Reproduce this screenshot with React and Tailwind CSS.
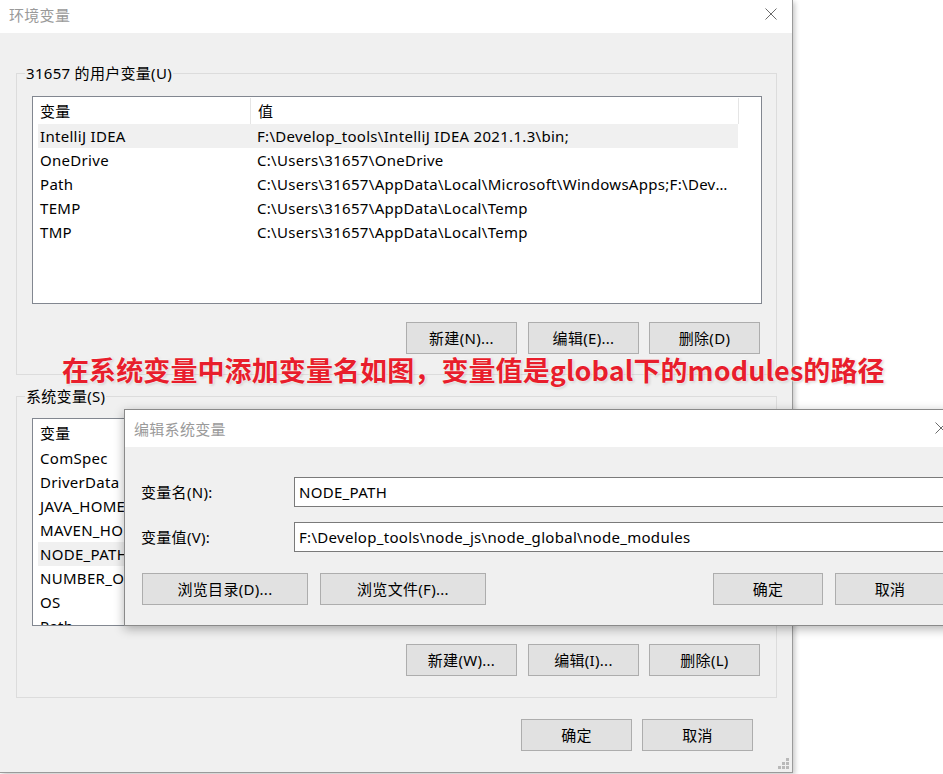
import React from "react";

const userVars = [
  ["IntelliJ IDEA", "F:\\Develop_tools\\IntelliJ IDEA 2021.1.3\\bin;"],
  ["OneDrive", "C:\\Users\\31657\\OneDrive"],
  ["Path", "C:\\Users\\31657\\AppData\\Local\\Microsoft\\WindowsApps;F:\\Develop_tools\\IntelliJ IDEA 2021.1.3\\bin;"],
  ["TEMP", "C:\\Users\\31657\\AppData\\Local\\Temp"],
  ["TMP", "C:\\Users\\31657\\AppData\\Local\\Temp"],
];

const sysVars = [
  ["ComSpec", "C:\\Windows\\system32\\cmd.exe"],
  ["DriverData", "C:\\Windows\\System32\\Drivers\\DriverData"],
  ["JAVA_HOME", "F:\\Develop_tools\\Java\\jdk1.8.0_291"],
  ["MAVEN_HOME", "F:\\Develop_tools\\apache-maven-3.8.1"],
  ["NODE_PATH", "F:\\Develop_tools\\node_js\\node_global\\node_modules"],
  ["NUMBER_OF_PROCESSORS", "8"],
  ["OS", "Windows_NT"],
  ["Path", "C:\\Windows\\system32;C:\\Windows;C:\\Windows\\System32\\Wbem"],
];

const CloseX = ({ className }) => (
  <svg width="12" height="12" viewBox="0 0 12 12" className={className}>
    <path d="M0.5 0.5 L11.5 11.5 M11.5 0.5 L0.5 11.5" stroke="#6b6b6b" strokeWidth="1" fill="none" />
  </svg>
);

const Button = ({ children, className = "" }) => (
  <button
    className={`h-[32px] bg-[#e1e1e1] border border-[#adadad] text-[15px] leading-[20px] text-black ${className}`}
  >
    {children}
  </button>
);

const VarList = ({ rows, selected, height }) => (
  <div className={`w-[730px] ${height} border border-[#828790] bg-white overflow-hidden`}>
    <div className="h-[27px] flex">
      <div className="w-[218px] h-[26px] mt-[1px] border-r border-[#e5e5e5] pl-[7px] leading-[26px]">变量</div>
      <div className="w-[488px] h-[26px] mt-[1px] border-r border-[#e5e5e5] pl-[7px] leading-[26px]">值</div>
    </div>
    <div className="pl-[5px]">
      {rows.map(([name, value], i) => (
        <div
          key={name + i}
          className={`w-[700px] h-[24px] flex leading-[24px] ${i === selected ? "bg-[#f0f0f0]" : ""}`}
        >
          <div className="w-[219px] pl-[2px] whitespace-nowrap overflow-hidden">{name}</div>
          <div className="w-[478px] whitespace-nowrap overflow-hidden text-ellipsis">{value}</div>
        </div>
      ))}
    </div>
  </div>
);

const GroupBox = ({ label, children, className = "" }) => (
  <div className={`relative h-[302px] border border-[#dcdcdc] ${className}`}>
    <span className="absolute left-[8px] top-[-11px] px-[1px] bg-[#f0f0f0] leading-[20px]">{label}</span>
    {children}
  </div>
);

export default function App() {
  return (
    <div className="relative w-[943px] h-[774px] overflow-hidden bg-white text-[15px] tracking-[0.3px] text-black font-['Noto_Sans','Noto_Sans_CJK_SC',sans-serif]">
      {/* main window */}
      <div className="relative w-[793px] h-[773px] flex flex-col bg-[#f0f0f0] border-r border-b border-[#9a9a9a] shadow-[2px_2px_5px_rgba(0,0,0,0.22)]">
        <div className="h-[33px] shrink-0 bg-white flex items-start pl-[9px]">
          <span className="mt-[5px] leading-[20px] text-[#9a9a9a]">环境变量</span>
          <CloseX className="ml-auto mr-[15px] mt-[8px]" />
        </div>

        <div className="flex-1 flex flex-col pl-[16px] pr-[15px] pt-[40px]">
          <GroupBox label="31657 的用户变量(U)" className="pt-[22px] pl-[15px]">
            <VarList rows={userVars} selected={0} height="h-[208px]" />
            <div className="flex justify-end pr-[16px] mt-[18px]">
              <Button className="w-[111px]">新建(N)...</Button>
              <Button className="w-[111px] ml-[11px]">编辑(E)...</Button>
              <Button className="w-[111px] ml-[10px]">删除(D)</Button>
            </div>
          </GroupBox>

          <GroupBox label="系统变量(S)" className="mt-[21px] pt-[21px] pl-[15px]">
            <VarList rows={sysVars} selected={4} height="h-[208px]" />
            <div className="flex justify-end pr-[16px] mt-[18px]">
              <Button className="w-[111px]">新建(W)...</Button>
              <Button className="w-[111px] ml-[11px]">编辑(I)...</Button>
              <Button className="w-[111px] ml-[10px]">删除(L)</Button>
            </div>
          </GroupBox>

          <div className="flex justify-end mt-[21px] mr-[24px]">
            <Button className="w-[111px]">确定</Button>
            <Button className="w-[111px] ml-[10px]">取消</Button>
          </div>
        </div>

        <svg width="12" height="12" viewBox="0 0 12 12" className="absolute right-[2px] bottom-[2px]">
          <g fill="#b9b9b9">
            <rect x="8" y="0" width="3" height="3" />
            <rect x="4" y="4" width="3" height="3" />
            <rect x="8" y="4" width="3" height="3" />
            <rect x="0" y="8" width="3" height="3" />
            <rect x="4" y="8" width="3" height="3" />
            <rect x="8" y="8" width="3" height="3" />
          </g>
        </svg>
      </div>

      {/* annotation */}
      <div className="absolute left-[62px] top-[352px] text-[27px] tracking-[0.1px] leading-[36px] font-bold text-[#e81e2c] whitespace-nowrap [text-shadow:0_0_2px_#fff,0_0_3px_#fff,1px_1px_3px_rgba(0,0,0,0.25)] font-['Noto_Sans_CJK_SC',sans-serif]">
        在系统变量中添加变量名如图，变量值是global下的modules的路径
      </div>

      {/* edit dialog */}
      <div className="absolute left-[124px] top-[409px] w-[840px] h-[217px] flex flex-col border border-[#8a8a8a] bg-[#f0f0f0] shadow-[0_3px_10px_rgba(0,0,0,0.3)]">
        <div className="h-[37px] shrink-0 bg-white flex items-start pl-[9px]">
          <span className="mt-[9px] leading-[20px] text-[#9a9a9a]">编辑系统变量</span>
          <CloseX className="ml-auto mr-[16px] mt-[12px]" />
        </div>
        <div className="flex flex-col pt-[30px]">
          <div className="h-[30px] flex items-center">
            <span className="w-[169px] pl-[16px]">变量名(N):</span>
            <div className="w-[660px] h-[30px] border border-[#7a7a7a] bg-white pl-[4px] leading-[28px]">NODE_PATH</div>
          </div>
          <div className="h-[30px] flex items-center mt-[15px]">
            <span className="w-[169px] pl-[16px]">变量值(V):</span>
            <div className="w-[660px] h-[30px] border border-[#7a7a7a] bg-white pl-[4px] leading-[28px]">
              F:\Develop_tools\node_js\node_global\node_modules
            </div>
          </div>
          <div className="flex mt-[21px]">
            <Button className="w-[166px] ml-[17px]">浏览目录(D)...</Button>
            <Button className="w-[166px] ml-[12px]">浏览文件(F)...</Button>
            <Button className="w-[110px] ml-[227px]">确定</Button>
            <Button className="w-[110px] ml-[12px]">取消</Button>
          </div>
        </div>
      </div>
    </div>
  );
}
